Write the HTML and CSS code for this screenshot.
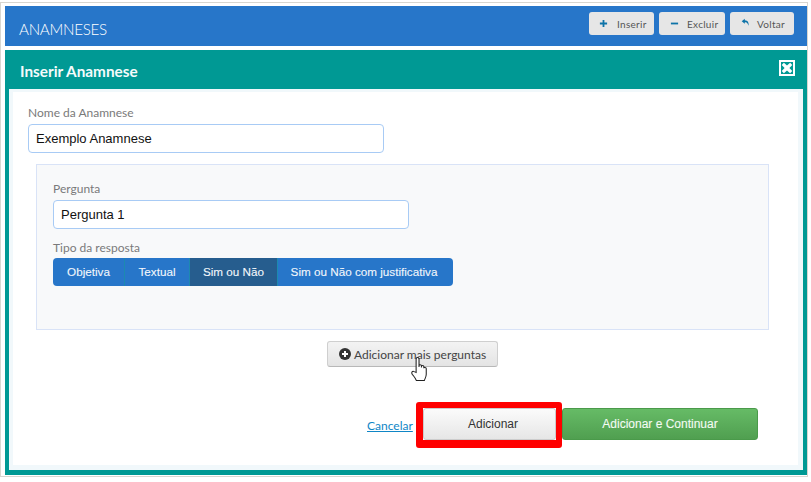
FILE: index.html
```html
<!DOCTYPE html>
<html lang="pt">
<head>
<meta charset="utf-8">
<title>Anamneses</title>
<link rel="stylesheet" href="styles.css">
</head>
<body>
<div class="frame">
  <header class="topbar">
    <h1 class="title">ANAMNESES</h1>
    <div class="tools">
      <button class="tool tool-ins"><svg class="ti" viewBox="0 0 10 10"><path d="M5 1v8M1 5h8"/></svg><span>Inserir</span></button>
      <button class="tool tool-exc"><svg class="ti" viewBox="0 0 10 10"><path d="M1 5h8"/></svg><span>Excluir</span></button>
      <button class="tool tool-vol"><svg class="ti ti-back" viewBox="0 0 10 10"><path d="M4.2 .8 .8 3.6l3.4 2.8V4.6c2 0 3 .6 3.6 2.6.5 1 .6 1.6.6 1.6.5-3.4-.6-6.2-4.2-6.4z"/></svg><span>Voltar</span></button>
    </div>
  </header>
  <section class="panel">
    <div class="panel-head">
      <h2 class="panel-title">Inserir Anamnese</h2>
      <span class="close"><svg viewBox="0 0 10 10"><path d="M2.4 .6 5 3 7.600 .6 9.400 2.400 7 5 9.400 7.600 7.600 9.400 5 7 2.400 9.400 .6 7.600 3 5 .6 2.400z"/></svg></span>
    </div>
    <div class="panel-body">
      <div class="content">
        <label class="label">Nome da Anamnese</label>
        <input class="input" type="text" value="Exemplo Anamnese">
        <div class="question">
          <label class="label">Pergunta</label>
          <input class="input" type="text" value="Pergunta 1">
          <label class="label label-tipo">Tipo da resposta</label>
          <div class="segmented">
            <span class="seg seg-a">Objetiva</span>
            <span class="seg seg-b">Textual</span>
            <span class="seg seg-c active">Sim ou Não</span>
            <span class="seg seg-d">Sim ou Não com justificativa</span>
          </div>
        </div>
        <div class="more-row">
          <button class="more">
            <svg class="more-icon" viewBox="0 0 12 12"><circle cx="6" cy="6" r="6"/><path d="M6 3v6M3 6h6"/></svg>Adicionar mais perguntas
            <svg class="hand" viewBox="0 0 20 28"><path d="M6.5 17V3.2C6.500 1 9.500 1 9.500 3.200V11.500 10.200C9.500 8.700 12 8.700 12 10.200V12 11C12 9.500 14.500 9.500 14.500 11V12.800C14.500 11.500 17 11.500 17 13V19C17 22 15.500 23.500 15 25.500H6.800C6 23 4.500 21.500 2.500 19 1 17 2.800 15 4.500 16.200Z"/></svg>
          </button>
        </div>
        <div class="actions">
          <a class="cancel" href="#">Cancelar</a>
          <span class="highlight"><button class="btn btn-light">Adicionar</button></span>
          <button class="btn btn-green">Adicionar e Continuar</button>
        </div>
      </div>
    </div>
  </section>
</div>
</body>
</html>
```
FILE: styles.css
```css
* { box-sizing: border-box; }
html, body { margin: 0; height: 100%; background: #fff; overflow: hidden; }
body { padding-top: 2px; }
.frame {
  width: 808px;
  height: 475px;
  background: #fff;
  border: 1px solid #d8d6d0;
  padding: 3px 0 0 4px;
  font-family: Lato, sans-serif;
}
.topbar {
  width: 802px;
  height: 40px;
  background: #2776c9;
  display: flex;
  align-items: center;
  justify-content: space-between;
  padding: 0 13px 0 14px;
}
.title { margin: 5px 0 0; font: 300 15.200px/20px Lato, sans-serif; color: #fff; letter-spacing: -.3px; }
.tools { display: flex; gap: 5px; margin-top: -5px; }
.tool {
  height: 23px;
  border: 0;
  border-radius: 3px;
  background: #e6e6e6;
  display: flex;
  align-items: center;
  padding: 0;
  font: 400 10px/12px Lato, sans-serif;
  letter-spacing: .3px;
  color: #555;
}
.tool-ins { width: 65px; padding-left: 10px; }
.tool-exc { width: 66px; padding-left: 11px; }
.tool-vol { width: 64px; padding-left: 11px; }
.ti { width: 9px; height: 9px; margin-right: 9px; stroke: #0d73a8; stroke-width: 2; fill: none; flex: none; }
.ti-back { fill: #0d73a8; stroke: none; margin-top: -3px; margin-right: 7px; }
.tool-exc .ti { margin-right: 8px; }
.panel {
  width: 802px;
  height: 425px;
  margin-top: 4px;
  background: #009994;
  padding: 0 4px 5px 4px;
  display: flex;
  flex-direction: column;
}
.panel-head {
  height: 39px;
  flex: none;
  display: flex;
  align-items: center;
  justify-content: space-between;
  padding: 3px 8px 0 11px;
}
.panel-title { margin: 0; font: 700 15.300px/18px Lato, sans-serif; color: #f4fbfb; }
.close {
  width: 16px;
  height: 16px;
  border: 2px solid #fff;
  background: #009994;
  margin-top: -7px;
  display: block;
}
.close svg { display: block; width: 12px; height: 12px; fill: #fff; }
.panel-body {
  flex: 1;
  background: #f1f8fb;
  padding: 3px 5px 5px 4px;
}
.content {
  height: 100%;
  background: #fff;
  padding: 13px 0 0 15px;
}
.label {
  display: block;
  font: 400 12px/15px Lato, sans-serif;
  color: #7a7a7a;
}
.input {
  display: block;
  width: 356px;
  height: 29px;
  margin-top: 4px;
  border: 1px solid #a8cbf5;
  border-radius: 4px;
  padding: 0 7px;
  font: 400 13px/20px "Liberation Sans", Arial, sans-serif;
  color: #111;
  background: #fff;
  outline: none;
}
.question {
  width: 733px;
  height: 166px;
  margin: 11px 0 0 8px;
  background: #f8f9fa;
  border: 1px solid #d9e3f7;
  padding: 16px 16px 0 16px;
}
.label-tipo { margin-top: 11px; }
.segmented {
  display: flex;
  width: 400px;
  height: 28px;
  margin-top: 3px;
  border-radius: 4px;
  overflow: hidden;
  background: #2776c9;
}
.seg {
  display: flex;
  align-items: center;
  justify-content: center;
  height: 100%;
  font: 400 11.700px/14px "Liberation Sans", Arial, sans-serif;
  color: #f2f7fc;
  border-right: 1px solid #1c8ab0;
  -webkit-text-stroke: .1px #f2f7fc;
}
.seg-a { width: 72px; }
.seg-b { width: 65px; }
.seg-c { width: 88px; }
.seg-d { width: 175px; border-right: 0; padding-right: 3px; }
.active { background: #265d8e; }
.more-row { display: flex; justify-content: center; margin-top: 11px; width: 769px; }
.more {
  position: relative;
  width: 171px;
  height: 26px;
  border: 1px solid #cfcfcf;
  border-bottom-color: #b8b8b8;
  border-radius: 3px;
  background: linear-gradient(#f3f3f3, #e4e4e4);
  display: flex;
  align-items: center;
  padding: 0 0 0 11px;
  font: 400 12px/15px Lato, sans-serif;
  color: #444;
  white-space: nowrap;
}
.more-icon { width: 12px; height: 12px; margin-right: 3px; fill: #333; stroke: #fff; stroke-width: 2; }
.more-icon circle { stroke: none; }
.hand {
  position: absolute;
  left: 81px;
  top: 14px;
  width: 21px;
  height: 27px;
  fill: #fff;
  stroke: #222;
  stroke-width: 1.100;
}
.actions {
  display: flex;
  align-items: center;
  margin-top: 35px;
  padding-left: 339px;
}
.cancel {
  font: 400 12px/15px Lato, sans-serif;
  color: #0f86c6;
  text-decoration: underline;
  margin-right: -1px;
  width: 50px;
}
.highlight {
  display: block;
  width: 146px;
  height: 46px;
  border: solid #f00;
  border-width: 6px 6px 8px 7px;
  border-radius: 3px;
}
.btn {
  height: 32px;
  border-radius: 3px;
  font: 400 12px/14px "Liberation Sans", Arial, sans-serif;
  display: block;
}
.btn-light {
  width: 133px;
  border: 1px solid #ccc;
  background: linear-gradient(#fbfbfb, #e6e6e6);
  color: #333;
  padding-left: 13px;
}
.btn-green {
  width: 196px;
  margin-top: -2px;
  border: 1px solid #4a9a4a;
  background: linear-gradient(#66bb66, #509f50);
  color: #f4fbf4;
  -webkit-text-stroke: .1px #f4fbf4;
}
```
